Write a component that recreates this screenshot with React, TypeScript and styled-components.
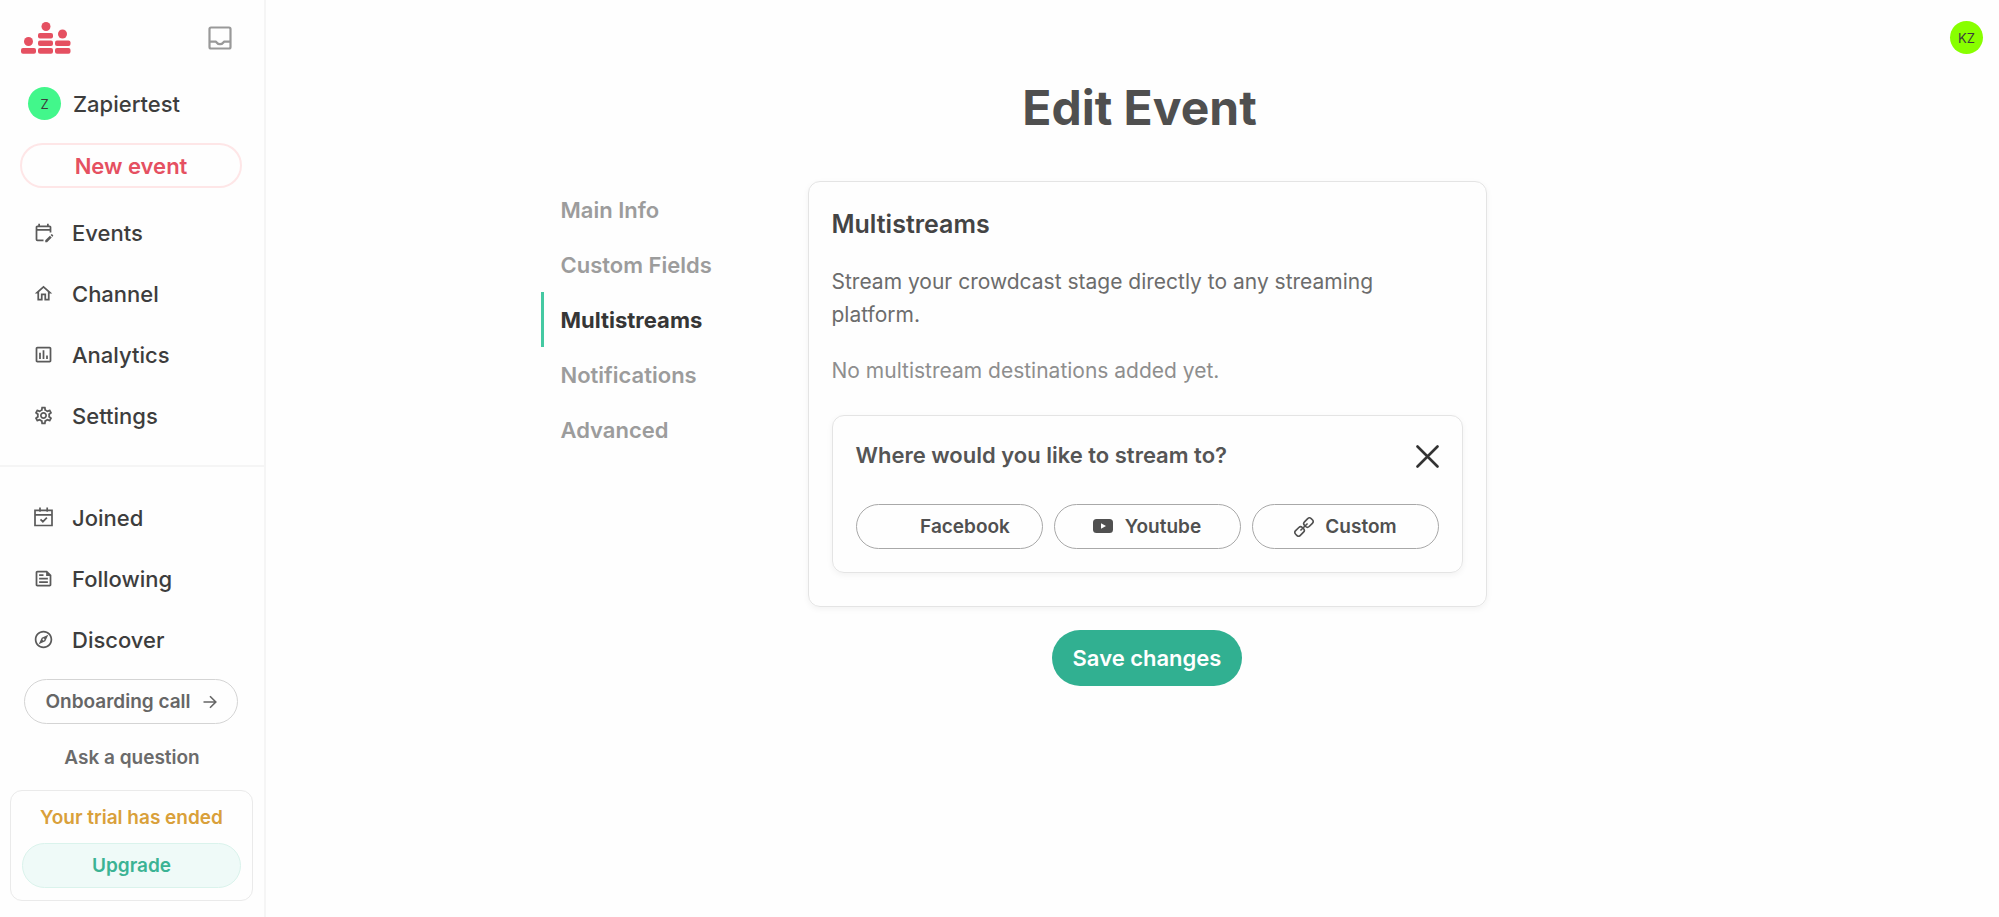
import React from 'react';
import styled, { createGlobalStyle, css } from 'styled-components';
import {
  MdOutlineEditCalendar,
  MdOutlineExplore,
  MdOutlineFeed,
  MdOutlineHome,
  MdOutlineInsertChartOutlined,
  MdOutlineSettings,
} from 'react-icons/md';

const GlobalStyle = createGlobalStyle`
  *, *::before, *::after { box-sizing: border-box; }
  body {
    margin: 0;
    background: #fefefe;
    color: #3d3d3d;
    font-family: Inter, 'Liberation Sans', sans-serif;
    font-size: 21px;
  }
  h1, h2, h3, p, ul { margin: 0; padding: 0; }
  ul { list-style: none; }
  button { font: inherit; cursor: pointer; }
  a { color: inherit; text-decoration: none; }
`;

const Page = styled.div`
  display: flex;
  min-height: 100vh;
`;

const Sidebar = styled.aside`
  display: flex;
  flex-direction: column;
  flex: none;
  width: 266px;
  border-right: 2px solid #f5f5f5;
`;

const SidebarTop = styled.div`
  display: flex;
  align-items: center;
  justify-content: space-between;
  padding: 20px 32px 0 20px;
  height: 56px;
`;

const IconButton = styled.button`
  display: flex;
  padding: 0;
  border: 0;
  background: none;
  color: inherit;
`;

const Avatar = styled.span<{ $color: string }>`
  display: grid;
  place-items: center;
  flex: none;
  width: 33px;
  height: 33px;
  border-radius: 50%;
  background: ${(p) => p.$color};
  font-size: 13px;
  font-weight: 400;
`;

const Account = styled.a`
  display: flex;
  align-items: center;
  gap: 12px;
  margin: 31px 28px 23px;
  font-size: 22px;
  font-weight: 500;
`;

const pill = css`
  display: flex;
  align-items: center;
  justify-content: center;
  height: 45px;
  border-radius: 24px;
  border: 1px solid;
  background: none;
  font-weight: 600;
`;

const NewEvent = styled.button`
  ${pill}
  margin: 0 22px 0 20px;
  border-width: 2px;
  border-color: #fee6e7;
  color: #e55061;
  font-size: 22px;
`;

const NavGroup = styled.ul<{ $divided?: boolean }>`
  padding: ${(p) => (p.$divided ? '20px 0 9px' : '14px 0 19px')};
  ${(p) => p.$divided && 'border-top: 2px solid #f5f5f5;'}
`;

const NavLink = styled.a`
  display: flex;
  align-items: center;
  gap: 18px;
  height: 61px;
  padding-left: 33px;
  font-size: 22px;
  font-weight: 500;

  svg {
    width: 21px;
    height: 21px;
    color: #5a5a5a;
  }
`;

const Onboarding = styled.a`
  ${pill}
  gap: 12px;
  margin: 0 26px 0 24px;
  border-color: #d4d4d4;
  color: #666;
  font-size: 19px;
`;

const Ask = styled.a`
  padding: 22px 0 20px;
  color: #6b6b6b;
  font-size: 19px;
  font-weight: 600;
  line-height: 24px;
  text-align: center;
`;

const Trial = styled.section`
  margin: 0 11px 0 10px;
  padding: 14px 11px 12px;
  border: 1px solid #eaeaea;
  border-radius: 12px;
`;

const TrialText = styled.p`
  margin-bottom: 12px;
  color: #d9a03a;
  font-size: 19px;
  font-weight: 600;
  line-height: 26px;
  text-align: center;
`;

const Upgrade = styled.button`
  ${pill}
  width: 100%;
  border-color: #daf3ec;
  background: #effaf8;
  color: #3bb394;
  font-size: 19px;
`;

const Main = styled.main`
  flex: 1;
  min-width: 0;
`;

const TopBar = styled.header`
  display: flex;
  justify-content: flex-end;
  padding: 21px 16px 0;
`;

const Title = styled.h1`
  margin: 24px 0 43px;
  padding-left: 14px;
  color: #4f4f4f;
  font-size: 48px;
  font-weight: 700;
  line-height: 60px;
  text-align: center;
`;

const Editor = styled.div`
  display: grid;
  grid-template-columns: 267px minmax(0, 679px) 1fr;
  max-width: 1184px;
  margin: 0 auto;
`;

const Tabs = styled.nav`
  display: flex;
  flex-direction: column;
  padding-top: 1px;
`;

const Tab = styled.a<{ $active?: boolean }>`
  display: flex;
  align-items: center;
  height: 55px;
  padding-left: 17px;
  border-left: 3px solid ${(p) => (p.$active ? '#44c9a2' : 'transparent')};
  color: ${(p) => (p.$active ? '#363636' : '#9c9c9c')};
  font-size: 22px;
  font-weight: ${(p) => (p.$active ? 700 : 600)};
`;

const card = css`
  border: 1px solid #e4e4e4;
  border-radius: 12px;
  box-shadow: 0 2px 6px rgba(0, 0, 0, 0.05);
`;

const Panel = styled.section`
  ${card}
  padding: 25px 23px 33px;
`;

const PanelTitle = styled.h2`
  margin-bottom: 24px;
  color: #444;
  font-size: 25px;
  font-weight: 600;
  line-height: 34px;
`;

const Text = styled.p<{ $muted?: boolean }>`
  margin-bottom: 23px;
  color: ${(p) => (p.$muted ? '#8e8e8e' : '#6c6c6c')};
  line-height: 33px;
`;

const Picker = styled.section`
  ${card}
  margin-top: 28px;
  padding: 23px;
`;

const PickerHead = styled.div`
  display: flex;
  align-items: center;
  justify-content: space-between;
  margin-bottom: 32px;
`;

const PickerTitle = styled.h3`
  color: #555;
  font-size: 22px;
  font-weight: 600;
  line-height: 33px;
`;

const Options = styled.div`
  display: grid;
  grid-template-columns: repeat(3, 1fr);
  gap: 11px;
`;

const Option = styled.button`
  ${pill}
  gap: 11px;
  padding: 0;
  border-color: #a8a8a8;
  color: #505050;
  font-size: 19px;
`;

const IconSlot = styled.span`
  display: grid;
  place-items: center;
  width: 21px;
  height: 21px;
`;

const Actions = styled.div`
  display: flex;
  justify-content: center;
  grid-column: 2;
  padding-top: 23px;
`;

const Save = styled.button`
  height: 56px;
  padding: 0 21px;
  border: 0;
  border-radius: 28px;
  background: #31b091;
  color: #fff;
  font-size: 22px;
  font-weight: 600;
`;

const Logo = () => (
  <svg width="51" height="34" viewBox="0 0 51 34" fill="#e55061" role="img" aria-label="Crowdcast">
    <circle cx="8.5" cy="20.5" r="4.5" />
    <circle cx="26" cy="5.5" r="4.5" />
    <circle cx="42.5" cy="13" r="4.5" />
    <rect x="1" y="27" width="15" height="5.7" rx="2" />
    <rect x="18" y="12" width="15" height="5.5" rx="2" />
    <rect x="18" y="19.5" width="15" height="5.5" rx="2" />
    <rect x="18" y="27" width="15" height="5.7" rx="2" />
    <rect x="35" y="19.5" width="15.5" height="5.5" rx="2" />
    <rect x="35" y="27" width="15.5" height="5.7" rx="2" />
  </svg>
);

const Inbox = () => (
  <svg width="24" height="24" viewBox="0 0 24 24" fill="none" stroke="#999" strokeWidth="2.2">
    <rect x="1.5" y="1.5" width="21" height="21" rx="1.5" />
    <path d="M1.5 15.7h6.2c1 0 1.2 2.5 4.3 2.5s3.3-2.5 4.3-2.5h6.2" />
  </svg>
);

const CalendarCheck = () => (
  <svg viewBox="0 0 21 21" fill="none" stroke="currentColor" strokeWidth="1.7">
    <path d="M2 3.3h17v15.2H2zM2 7.9h17M7 .6v4.2M14.2 .6v4.2M7.5 12.3l2.4 2.4 4-4" />
  </svg>
);

const Arrow = () => (
  <svg width="14" height="14" viewBox="0 0 14 14" fill="none" stroke="currentColor" strokeWidth="1.6">
    <path d="M.5 7h12M7 1.2L12.8 7 7 12.8" />
  </svg>
);

const Close = () => (
  <svg width="24" height="24" viewBox="0 0 24 24" fill="none" stroke="#333" strokeWidth="2.6" strokeLinecap="round">
    <path d="M2.5 2.5l20 20M22.5 2.5l-20 20" />
  </svg>
);

const Youtube = () => (
  <svg width="20" height="15" viewBox="0 0 20 15">
    <rect width="20" height="14" rx="3.5" fill="#505050" />
    <path d="M8 4.2v5.6l5-2.8z" fill="#fff" />
  </svg>
);

const Chain = () => (
  <svg width="20" height="20" viewBox="0 0 20 20" fill="none" stroke="#505050" strokeWidth="1.6">
    <g transform="rotate(-45 10 10)">
      <rect x="-1" y="6.7" width="9.5" height="6.6" rx="2.5" />
      <rect x="11.5" y="6.7" width="9.5" height="6.6" rx="2.5" />
      <path d="M5 10h10" />
    </g>
  </svg>
);

const manageLinks = [
  { label: 'Events', icon: <MdOutlineEditCalendar /> },
  { label: 'Channel', icon: <MdOutlineHome /> },
  { label: 'Analytics', icon: <MdOutlineInsertChartOutlined /> },
  { label: 'Settings', icon: <MdOutlineSettings /> },
];

const browseLinks = [
  { label: 'Joined', icon: <CalendarCheck /> },
  { label: 'Following', icon: <MdOutlineFeed /> },
  { label: 'Discover', icon: <MdOutlineExplore /> },
];

const tabs = ['Main Info', 'Custom Fields', 'Multistreams', 'Notifications', 'Advanced'];

const destinations = [
  { label: 'Facebook', icon: null },
  { label: 'Youtube', icon: <Youtube /> },
  { label: 'Custom', icon: <Chain /> },
];

type LinkItem = { label: string; icon: React.ReactNode };

const NavItems = ({ items }: { items: LinkItem[] }) => (
  <>
    {items.map((item) => (
      <li key={item.label}>
        <NavLink href="#">
          {item.icon}
          {item.label}
        </NavLink>
      </li>
    ))}
  </>
);

export default function App() {
  return (
    <Page>
      <GlobalStyle />
      <Sidebar>
        <SidebarTop>
          <Logo />
          <IconButton aria-label="Inbox">
            <Inbox />
          </IconButton>
        </SidebarTop>
        <Account href="#">
          <Avatar $color="#42f78b">Z</Avatar>
          Zapiertest
        </Account>
        <NewEvent>New event</NewEvent>
        <nav>
          <NavGroup>
            <NavItems items={manageLinks} />
          </NavGroup>
          <NavGroup $divided>
            <NavItems items={browseLinks} />
          </NavGroup>
        </nav>
        <Onboarding href="#">
          Onboarding call
          <Arrow />
        </Onboarding>
        <Ask href="#">Ask a question</Ask>
        <Trial>
          <TrialText>Your trial has ended</TrialText>
          <Upgrade>Upgrade</Upgrade>
        </Trial>
      </Sidebar>
      <Main>
        <TopBar>
          <IconButton aria-label="Profile">
            <Avatar $color="#88ff00">KZ</Avatar>
          </IconButton>
        </TopBar>
        <Title>Edit Event</Title>
        <Editor>
          <Tabs>
            {tabs.map((tab) => (
              <Tab key={tab} href="#" $active={tab === 'Multistreams'}>
                {tab}
              </Tab>
            ))}
          </Tabs>
          <Panel>
            <PanelTitle>Multistreams</PanelTitle>
            <Text>Stream your crowdcast stage directly to any streaming platform.</Text>
            <Text $muted>No multistream destinations added yet.</Text>
            <Picker>
              <PickerHead>
                <PickerTitle>Where would you like to stream to?</PickerTitle>
                <IconButton aria-label="Close">
                  <Close />
                </IconButton>
              </PickerHead>
              <Options>
                {destinations.map((d) => (
                  <Option key={d.label}>
                    <IconSlot>{d.icon}</IconSlot>
                    {d.label}
                  </Option>
                ))}
              </Options>
            </Picker>
          </Panel>
          <Actions>
            <Save>Save changes</Save>
          </Actions>
        </Editor>
      </Main>
    </Page>
  );
}
